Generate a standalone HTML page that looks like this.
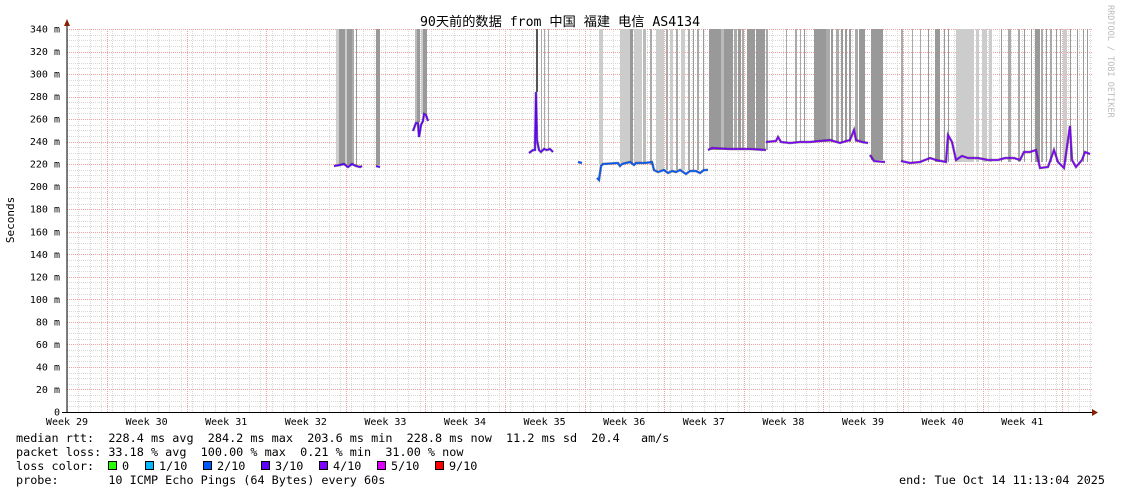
<!DOCTYPE html>
<html><head><meta charset="utf-8"><style>
html,body{margin:0;padding:0;background:#fff;width:1121px;height:494px;overflow:hidden}
svg text{font-family:"DejaVu Sans Mono","Liberation Mono","Noto Sans CJK SC",monospace;white-space:pre}
</style></head><body>
<svg width="1121" height="494" xmlns="http://www.w3.org/2000/svg">
<rect width="1121" height="494" fill="#fff"/>
<g id="grid"></g>
<g id="bars"></g>
<g id="data"></g>
<line x1="67" y1="22" x2="67" y2="413" stroke="#000" stroke-width="1"/>
<line x1="62" y1="412.5" x2="1095" y2="412.5" stroke="#000" stroke-width="1"/>
<polygon points="64,26 67,19 70,26" fill="#8b2000"/>
<polygon points="1092,409 1098,412.5 1092,416" fill="#8b2000"/>
<text x="560" y="26" font-size="13.2" text-anchor="middle">90天前的数据 from 中国 福建 电信 AS4134</text>
<text transform="translate(14,220) rotate(-90)" font-size="11" text-anchor="middle">Seconds</text>
<text transform="translate(1108,5) rotate(90)" font-size="8.5" fill="#bbb">RRDTOOL / TOBI OETIKER</text>
<g id="ylab" font-size="10" text-anchor="end"></g>
<g id="xlab" font-size="10" text-anchor="middle"></g>
<g font-size="11.8">
<text x="16" y="442">median rtt:  228.4 ms avg  284.2 ms max  203.6 ms min  228.8 ms now  11.2 ms sd  20.4   am/s</text>
<text x="16" y="456">packet loss: 33.18 % avg  100.00 % max  0.21 % min  31.00 % now</text>
<text x="16" y="470">loss color:  </text>
<text x="16" y="484">probe:       10 ICMP Echo Pings (64 Bytes) every 60s</text>
<text x="1105" y="484" text-anchor="end">end: Tue Oct 14 11:13:04 2025</text>
<g stroke="#000" stroke-width="1">
<rect x="108.5" y="461.5" width="8" height="8" fill="#26ff00"/>
<rect x="145.5" y="461.5" width="8" height="8" fill="#00b8ff"/>
<rect x="203.5" y="461.5" width="8" height="8" fill="#0059ff"/>
<rect x="261.5" y="461.5" width="8" height="8" fill="#5e00ff"/>
<rect x="319.5" y="461.5" width="8" height="8" fill="#7e00ff"/>
<rect x="377.5" y="461.5" width="8" height="8" fill="#dd00ff"/>
<rect x="435.5" y="461.5" width="8" height="8" fill="#ff0000"/>
</g>
<text x="122" y="470">0</text><text x="159" y="470">1/10</text><text x="217" y="470">2/10</text><text x="275" y="470">3/10</text><text x="333" y="470">4/10</text><text x="391" y="470">5/10</text><text x="449" y="470">9/10</text>
</g>
</svg>
<script>
var NS="http://www.w3.org/2000/svg";
function el(p,t,a){var e=document.createElementNS(NS,t);for(var k in a)e.setAttribute(k,a[k]);p.appendChild(e);return e;}
var g=document.getElementById('grid');
var Y=function(v){return 412-v*383/340;};
for(var v=5;v<=340;v+=5){if(v%20==0)continue;var y=Math.round(Y(v))+.5;el(g,'line',{x1:67,x2:1093,y1:y,y2:y,stroke:'#d8d8d8','stroke-dasharray':'1,1'});}
for(var x=67;x<1094;x+=79.6/7){var xx=Math.round(x)+.5;el(g,'line',{x1:xx,x2:xx,y1:29,y2:412,stroke:'#d8d8d8','stroke-dasharray':'1,1'});}
for(var v=20;v<=340;v+=20){var y=Math.round(Y(v))+.5;el(g,'line',{x1:67,x2:1093,y1:y,y2:y,stroke:'#f2a0a0','stroke-dasharray':'1,1'});}
for(var x=107;x<1094;x+=79.6){var xx=Math.round(x)+.5;el(g,'line',{x1:xx,x2:xx,y1:29,y2:412,stroke:'#f2a0a0','stroke-dasharray':'1,1'});}
var yl=document.getElementById('ylab');
for(var v=0;v<=340;v+=20){var t=el(yl,'text',{x:60,y:Y(v)+3.5});t.textContent=v==0?'0':v+' m';}
var xl=document.getElementById('xlab');
for(var i=0;i<13;i++){var t=el(xl,'text',{x:67+79.6*i,y:425});t.textContent='Week '+(29+i);}
var b=document.getElementById('bars');
var bars=[[336,3,165,'#ccc'],[339,6,165,'#999'],[345,2,165,'#ccc'],[347,5,165,'#999'],[352,2,165,'#aaa'],[356,1,165,'#999'],[376,4,165,'#999'],
[415,2,122,'#bbb'],[417,3,122,'#999'],[421,2,114,'#ccc'],[423,4,114,'#999'],
[536,2,92,'#555'],[541,1,150,'#aaa'],[544,1,150,'#aaa'],[548,1,150,'#aaa'],[599,4,165,'#ccc'],
[620,4,163,'#ccc'],[624,6,163,'#ccc'],[630,3,163,'#999'],[634,8,163,'#ccc'],[643,3,163,'#bbb'],[650,2,165,'#aaa'],[656,8,170,'#ccc'],[666,2,170,'#aaa'],[670,3,170,'#ccc'],[676,2,170,'#aaa'],[681,4,170,'#ccc'],[688,2,170,'#aaa'],[693,1,170,'#999'],[697,2,170,'#aaa'],[703,1,170,'#999'],
[709,12,150,'#999'],[721,3,150,'#bbb'],[724,9,150,'#999'],[734,3,150,'#aaa'],[738,3,150,'#999'],[742,2,150,'#aaa'],[747,8,150,'#999'],[756,9,150,'#999'],[766,2,150,'#aaa'],
[786,1,142,'#aaa'],[795,2,142,'#aaa'],[800,1,142,'#aaa'],[804,1,142,'#999'],[814,7,142,'#999'],[821,5,142,'#999'],[826,4,142,'#aaa'],[831,2,142,'#999'],[836,3,142,'#aaa'],[841,2,142,'#999'],[845,2,142,'#999'],[849,2,142,'#999'],[855,3,142,'#aaa'],[859,6,142,'#999'],[871,12,160,'#999'],
[901,1,162,'#aaa'],[902,1,162,'#aaa'],[912,1,162,'#aaa'],[920,1,162,'#aaa'],[928,1,162,'#999'],[935,5,162,'#999'],[944,1,162,'#999'],[948,1,162,'#999'],[956,7,162,'#ccc'],[963,6,162,'#ccc'],[969,5,162,'#ccc'],[976,3,162,'#ccc'],[982,5,162,'#ccc'],[989,3,162,'#ccc'],[1001,1,162,'#999'],[1008,3,162,'#aaa'],[1018,2,162,'#aaa'],[1024,1,162,'#999'],[1031,1,162,'#999'],[1035,5,162,'#999'],[1041,2,162,'#aaa'],[1046,1,162,'#999'],[1050,2,162,'#aaa'],[1056,1,162,'#999'],[1060,1,162,'#aaa'],[1063,4,162,'#ccc'],[1070,1,162,'#999'],[1077,1,162,'#999'],[1083,1,162,'#999'],[1087,1,162,'#999']];
bars.forEach(function(r){el(b,'rect',{x:r[0],y:29,width:r[1],height:r[2]-29,fill:r[3]});});
var d=document.getElementById('data');
var lines=[
['334,166 340,165 344,164 348,167 352,164 356,166 360,167 362,166','#5e00ff'],
['376,166 380,167','#5e00ff'],
['413,131 416,123 418,123 419,137 421,125 423,121 424,114 426,115 428,121','#5e00ff'],
['529,153 533,150 535,150 536,92 537,140 539,150 541,152 544,149 547,150 550,149 553,152','#5e00ff'],
['578,162 582,163','#0059ff'],
['597,178 599,180 601,166 603,164 618,163 620,166 622,164 630,162 634,165 636,163 645,163 652,162 654,170 658,172 664,170 668,173 672,171 676,172 680,170 686,174 690,171 696,171 700,173 704,170 708,170','#0059ff'],
['708,150 712,148 730,149 750,149 766,150','#7e00ff'],
['766,142 776,141 778,137 781,142 790,143 800,142 810,142 820,141 830,140 840,143 850,140 854,130 856,140 862,142 868,143','#7e00ff'],
['870,155 874,161 885,162','#7e00ff'],
['901,161 910,163 920,162 930,158 936,160 946,162 948,135 952,142 956,160 962,156 968,158 978,158 988,160 998,160 1005,158 1014,158 1020,160 1024,152 1030,152 1036,150 1040,168 1048,167 1054,150 1058,162 1064,168 1070,126 1072,160 1076,167 1082,160 1085,152 1090,154','#7e00ff']];
lines.forEach(function(l){el(d,'polyline',{points:l[0],fill:'none',stroke:'#333','stroke-width':2.5,opacity:.6});el(d,'polyline',{points:l[0],fill:'none',stroke:l[1],'stroke-width':1.5});});
</script>
</body></html>
